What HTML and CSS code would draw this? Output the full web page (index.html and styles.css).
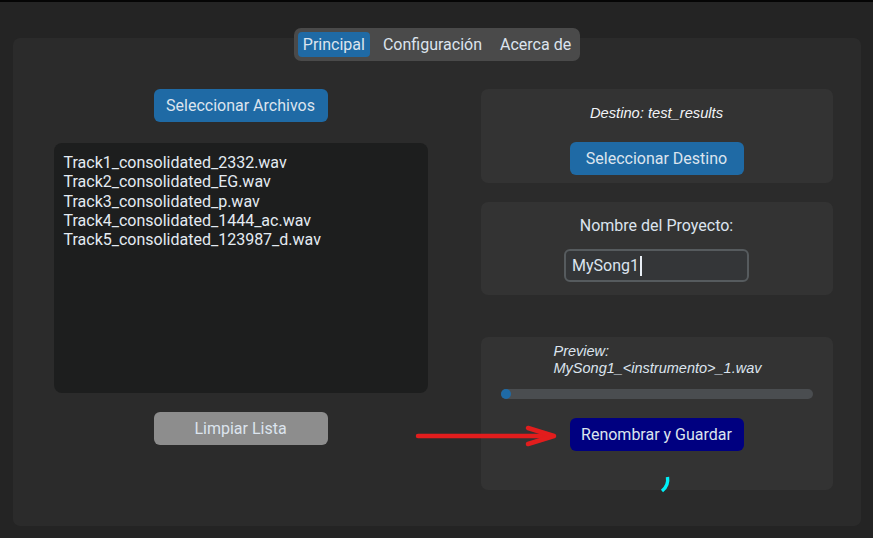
FILE: index.html
```html
<!DOCTYPE html>
<html lang="es">
<head>
<meta charset="utf-8">
<title>Renombrador</title>
<link rel="stylesheet" href="styles.css">
</head>
<body>
<div class="app">
  <nav class="tabs">
    <span class="tab active">Principal</span>
    <span class="tab">Configuración</span>
    <span class="tab">Acerca de</span>
  </nav>
  <main class="panel">
    <section class="left">
      <button class="btn blue">Seleccionar Archivos</button>
      <div class="filelist">
        <div>Track1_consolidated_2332.wav</div>
        <div>Track2_consolidated_EG.wav</div>
        <div>Track3_consolidated_p.wav</div>
        <div>Track4_consolidated_1444_ac.wav</div>
        <div>Track5_consolidated_123987_d.wav</div>
      </div>
      <button class="btn gray">Limpiar Lista</button>
    </section>
    <section class="right">
      <div class="frame dest">
        <div class="italic">Destino: test_results</div>
        <button class="btn blue">Seleccionar Destino</button>
      </div>
      <div class="frame name">
        <div class="label">Nombre del Proyecto:</div>
        <div class="entry"><span>MySong1</span><span class="caret"></span></div>
      </div>
      <div class="frame run">
        <div class="preview italic">Preview:<br>MySong1_&lt;instrumento&gt;_1.wav</div>
        <div class="progress"><span class="dot"></span></div>
        <button class="btn navy">Renombrar y Guardar</button>
        <svg class="spinner" width="12" height="18" viewBox="0 0 12 18"><path d="M8.5 1 C9.5 7 8 11 3 15" stroke="#00f0f8" stroke-width="3.4" fill="none" stroke-linecap="butt"/></svg>
      </div>
    </section>
    <svg class="arrow" width="145" height="24" viewBox="0 0 145 24"><path d="M3 12 H136" stroke="#e21d1d" stroke-width="4.5" stroke-linecap="round"/><path d="M113 4 L139 12 L113 20" stroke="#e21d1d" stroke-width="4.5" fill="none" stroke-linecap="round" stroke-linejoin="round"/></svg>
  </main>
</div>
</body>
</html>
```

FILE: styles.css
```css
* { box-sizing: border-box; }
html, body { margin: 0; padding: 0; }
body {
  background: #242424;
  border-top: 2px solid #050505;
  height: 538px;
  overflow: hidden;
  font-family: Roboto, "Liberation Sans", sans-serif;
  color: #dce4ee;
}
.app {
  padding-top: 26px;
  display: flex;
  flex-direction: column;
  align-items: center;
}
.tabs {
  position: relative;
  z-index: 1;
  display: flex;
  height: 33px;
  padding: 4px;
  background: #4a4a4a;
  border-radius: 7px;
  margin-bottom: -23px;
  margin-left: 1px;
}
.tab {
  font-size: 16px;
  line-height: 25px;
  padding: 0 5px;
  border-radius: 4px;
  margin-right: 8px;
}
.tab:last-child { margin-right: 0; }
.tab.active { background: #1f6aa5; }
.panel {
  position: relative;
  width: 848px;
  height: 488px;
  background: #2b2b2b;
  border-radius: 7px;
  display: grid;
  grid-template-columns: 374px 352px;
  column-gap: 53px;
  padding: 51px 28px 0 41px;
  align-items: start;
}
.btn {
  display: block;
  width: 174px;
  height: 33px;
  border: none;
  border-radius: 6px;
  font-family: Roboto, "Liberation Sans", sans-serif;
  font-size: 16px;
  color: #dce4ee;
  padding: 0;
  margin: 0 auto;
}
.blue { background: #1f6aa5; }
.gray { background: #8d8d8d; }
.navy { background: #000080; }
.left {
  display: flex;
  flex-direction: column;
  align-items: center;
}
.filelist {
  width: 374px;
  height: 250px;
  margin: 21px 0 19px;
  background: #1d1e1e;
  border-radius: 8px;
  padding: 10px 10px;
  font-size: 16px;
  line-height: 19.25px;
  color: #e4ebf2;
}
.right {
  display: flex;
  flex-direction: column;
}
.frame {
  background: #333333;
  border-radius: 7px;
  display: flex;
  flex-direction: column;
  align-items: center;
}
.italic {
  font-family: "Liberation Sans", Arial, sans-serif;
  font-style: italic;
}
.dest {
  height: 94px;
  padding-top: 14px;
}
.dest .italic {
  font-size: 14.7px;
  line-height: 20px;
  margin-bottom: 19px;
  color: #f2f4f7;
}
.name {
  height: 93px;
  margin-top: 19px;
  padding-top: 14px;
}
.label {
  font-size: 16px;
  line-height: 20px;
  margin-bottom: 13px;
}
.entry {
  width: 185px;
  height: 33px;
  border: 2px solid #565b5e;
  border-radius: 6px;
  background: #343638;
  padding-left: 6px;
  display: flex;
  align-items: center;
  font-size: 16px;
}
.caret {
  display: inline-block;
  width: 2px;
  height: 20px;
  background: #e8eef4;
  margin-left: 1px;
}
.run {
  position: relative;
  height: 153px;
  margin-top: 42px;
  padding-top: 6px;
}
.preview {
  font-size: 14.5px;
  line-height: 17px;
  text-align: left;
  margin-left: 2px;
}
.progress {
  width: 312px;
  height: 10px;
  margin-top: 12px;
  background: #4a4d50;
  border-radius: 5px;
  align-self: flex-start;
  margin-left: 20px;
}
.dot {
  display: block;
  width: 10px;
  height: 10px;
  border-radius: 50%;
  background: #1f6aa5;
}
.run .btn { margin-top: 19px; }
.spinner {
  position: absolute;
  left: 178px;
  top: 139px;
}
.arrow {
  position: absolute;
  left: 402px;
  top: 386px;
}
```
